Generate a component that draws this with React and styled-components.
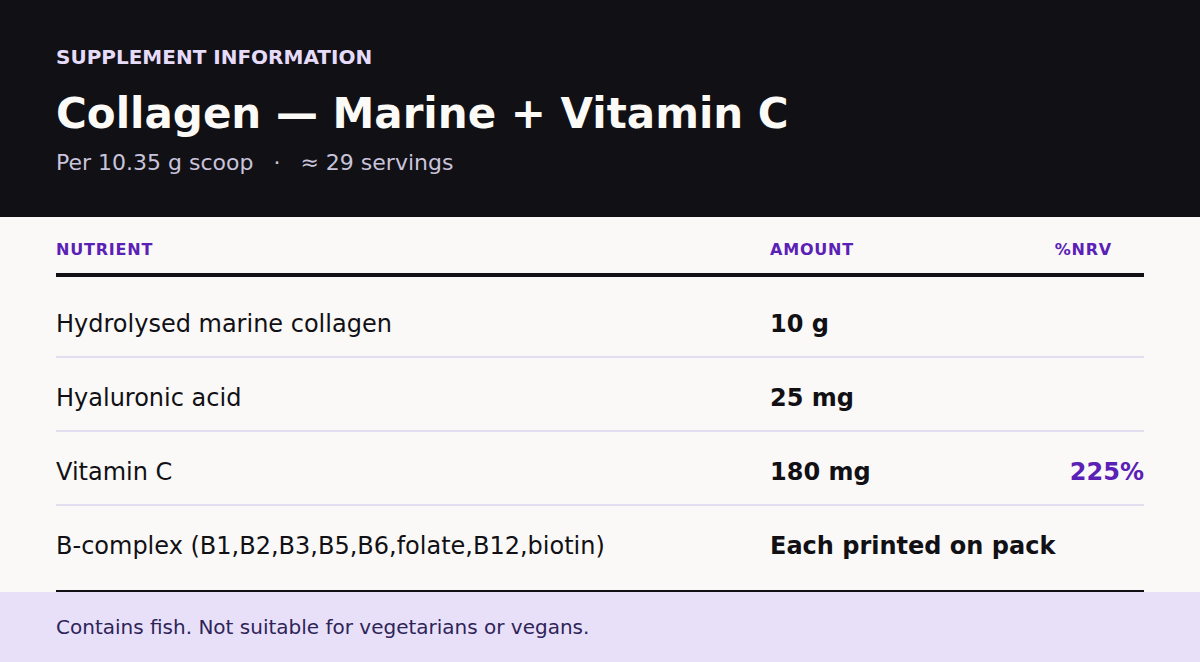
import React from 'react';
import styled, { createGlobalStyle } from 'styled-components';

const rows = [
  { name: 'Hydrolysed marine collagen', amount: '10 g', nrv: '' },
  { name: 'Hyaluronic acid', amount: '25 mg', nrv: '' },
  { name: 'Vitamin C', amount: '180 mg', nrv: '225%' },
  { name: 'B-complex (B1,B2,B3,B5,B6,folate,B12,biotin)', amount: 'Each printed on pack', nrv: '' },
];

const App = () => {
  return (
    <Page>
      <GlobalStyle />
      <Header>
        <Eyebrow>Supplement information</Eyebrow>
        <Title>Collagen — Marine + Vitamin C</Title>
        <Subtitle>
          Per 10.35 g scoop<Dot>·</Dot>≈ 29 servings
        </Subtitle>
      </Header>
      <Table>
        <HeadRow>
          <HeadCell>Nutrient</HeadCell>
          <HeadCell>Amount</HeadCell>
          <HeadCell $right>%NRV</HeadCell>
        </HeadRow>
        <Body>
          {rows.map((r) => (
            <Row key={r.name}>
              <Name>{r.name}</Name>
              <Amount>{r.amount}</Amount>
              <Nrv>{r.nrv}</Nrv>
            </Row>
          ))}
        </Body>
      </Table>
      <Footer>Contains fish. Not suitable for vegetarians or vegans.</Footer>
    </Page>
  );
};

export default App;

const GlobalStyle = createGlobalStyle`
  html, body {
    margin: 0;
    padding: 0;
    background: #faf9f7;
  }
  * {
    box-sizing: border-box;
  }
`;

const Page = styled.main`
  width: 1200px;
  height: 662px;
  display: flex;
  flex-direction: column;
  background: #faf9f7;
  font-family: 'DejaVu Sans', 'Liberation Sans', sans-serif;
  color: #111015;
  overflow: hidden;
`;

const Header = styled.header`
  height: 217px;
  padding: 46px 56px 0;
  background: #111015;
  display: flex;
  flex-direction: column;
`;

const Eyebrow = styled.div`
  font-size: 20px;
  line-height: 23px;
  font-weight: 700;
  text-transform: uppercase;
  color: #e6dcfa;
`;

const Title = styled.h1`
  margin: 20px 0 0;
  font-size: 42px;
  line-height: 50px;
  font-weight: 700;
  color: #fbfaf7;
`;

const Subtitle = styled.div`
  margin-top: 11px;
  font-size: 22px;
  line-height: 26px;
  color: #c9c4dc;
`;

const Dot = styled.span`
  margin: 0 20px;
`;

const Table = styled.section`
  flex: 1;
  padding: 0 56px;
  display: flex;
  flex-direction: column;
`;

const HeadRow = styled.div`
  display: grid;
  grid-template-columns: 714px 1fr 120px;
  align-items: center;
  padding: 23px 0 14px;
  border-bottom: 4px solid #111015;
`;

const HeadCell = styled.div`
  font-size: 16px;
  line-height: 19px;
  font-weight: 700;
  letter-spacing: 0.05em;
  text-transform: uppercase;
  color: #5b21b6;
  text-align: ${({ $right }) => ($right ? 'right' : 'left')};
  padding-right: ${({ $right }) => ($right ? '32px' : '0')};
`;

const Body = styled.div`
  padding: 7px 0 12px;
  border-bottom: 2px solid #111015;
`;

const Row = styled.div`
  display: grid;
  grid-template-columns: 714px 1fr 120px;
  align-items: center;
  height: 74px;
  padding-top: 8px;
  border-bottom: 2px solid #e2def0;

  &:last-child {
    height: 72px;
    border-bottom: none;
  }
`;

const Name = styled.div`
  font-size: 24px;
  line-height: 28px;
  color: #111015;
`;

const Amount = styled.div`
  font-size: 24px;
  line-height: 28px;
  font-weight: 700;
  color: #111015;
  white-space: nowrap;
`;

const Nrv = styled.div`
  font-size: 24px;
  line-height: 28px;
  font-weight: 700;
  color: #5b21b6;
  text-align: right;
`;

const Footer = styled.footer`
  height: 70px;
  padding: 0 56px;
  display: flex;
  align-items: center;
  background: #e8e0f9;
  color: #2e2458;
  font-size: 20px;
`;
